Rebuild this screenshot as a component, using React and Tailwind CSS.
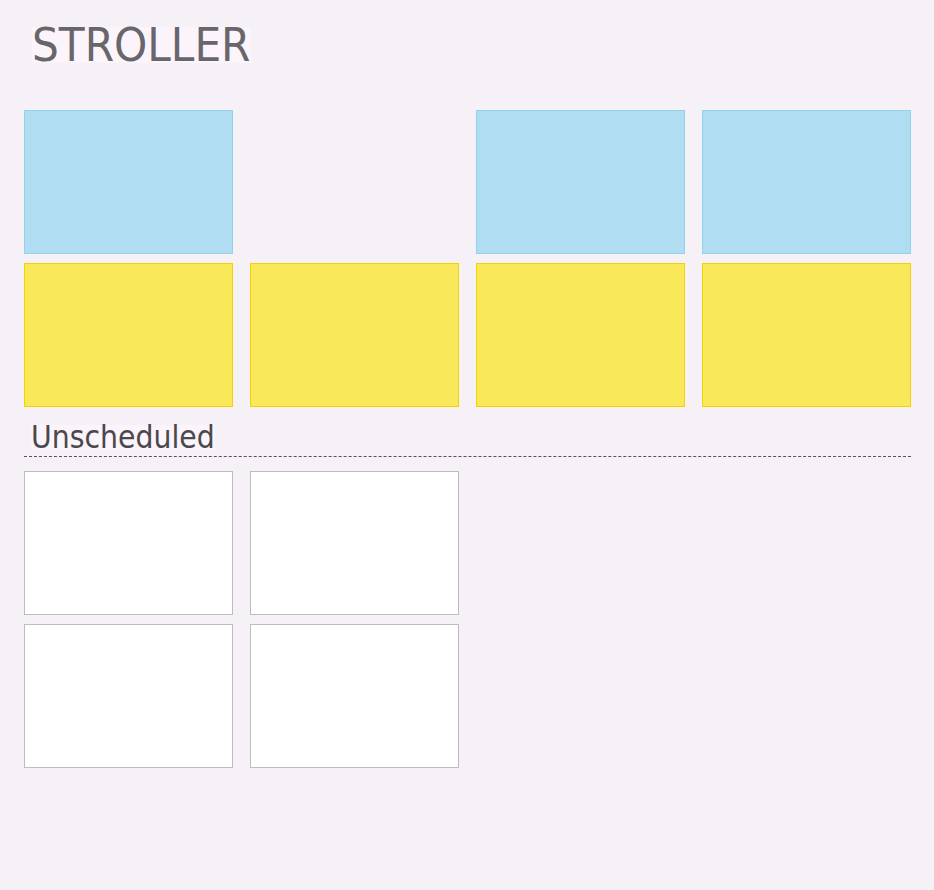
export default function App() {
  const blue = "h-[144px] w-[209px] border border-[#8fd3ef] bg-[#b0ddf1]";
  const yellow = "h-[144px] w-[209px] border border-[#f3d200] bg-[#f8e85a]";
  const white = "h-[144px] w-[209px] border border-[#bfbcc0] bg-white";
  return (
    <div className="min-h-[890px] w-[934px] bg-[#f5f1f6] pl-[24px] pr-[23px] pt-[27px]" style={{ fontFamily: "Tahoma, 'DejaVu Sans Condensed', 'DejaVu Sans', sans-serif" }}>
      <div className="flex h-[83px] items-start pl-[8px]">
        <h1 className="font-stretch-condensed bg-[#fbf4fb] text-[47px] leading-[36px] text-[#68666b]">STROLLER</h1>
      </div>
      <div className="grid grid-cols-[209px_209px_209px_209px] gap-x-[17px] gap-y-[9px]">
        <div className={blue} />
        <div />
        <div className={blue} />
        <div className={blue} />
        <div className={yellow} />
        <div className={yellow} />
        <div className={yellow} />
        <div className={yellow} />
      </div>
      <div className="mt-[18px] w-[887px] border-b border-dashed border-[#555] pb-[6px] pl-[7px]">
        <div className="w-fit font-stretch-condensed bg-[#fbf4fb] text-[31.5px] leading-[25px] text-[#4a484c]">Unscheduled</div>
      </div>
      <div className="mt-[14px] grid grid-cols-[209px_209px] gap-x-[17px] gap-y-[9px]">
        <div className={white} />
        <div className={white} />
        <div className={white} />
        <div className={white} />
      </div>
    </div>
  );
}
